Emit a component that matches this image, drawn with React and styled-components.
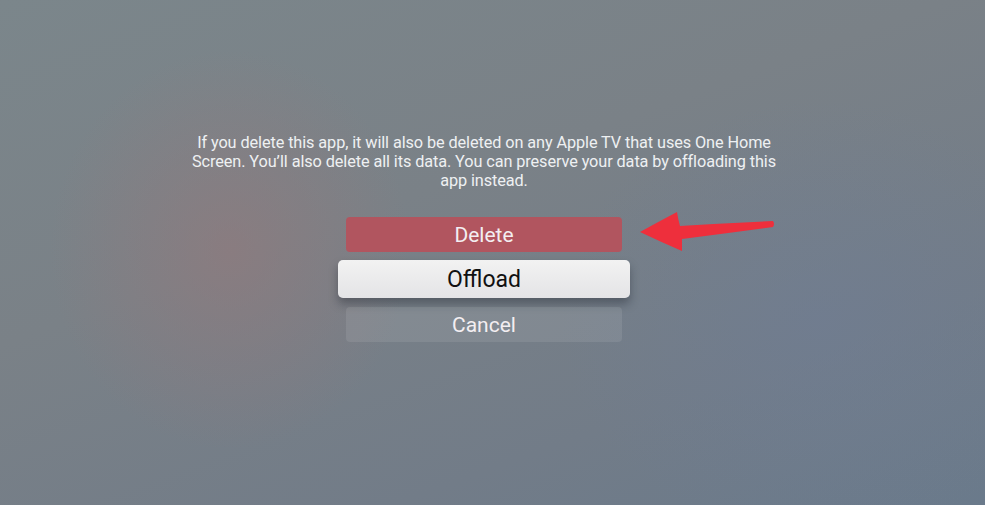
import React from "react";
import styled, { createGlobalStyle } from "styled-components";

const Global = createGlobalStyle`
  html, body { margin: 0; padding: 0; }
  body { font-family: Roboto, "Liberation Sans", Arial, sans-serif; }
`;

const Screen = styled.div`
  width: 985px;
  height: 505px;
  overflow: hidden;
  box-sizing: border-box;
  padding: 133px 17px 0 0;
  display: flex;
  flex-direction: column;
  align-items: center;
  background:
    radial-gradient(ellipse 180px 200px at 230px 250px, rgba(150, 120, 122, 0.55), rgba(150, 120, 122, 0) 100%),
    radial-gradient(ellipse 260px 220px at 820px 320px, rgba(110, 125, 150, 0.5), rgba(110, 125, 150, 0) 100%),
    linear-gradient(160deg, #7b868b 0%, #7a8187 40%, #727c88 75%, #6a7a8b 100%);
`;

const Message = styled.p`
  margin: 0;
  width: 600px;
  text-align: center;
  color: #eef0f2;
  font-size: 16.3px;
  line-height: 19px;
  letter-spacing: -0.1px;
`;

const ButtonStack = styled.div`
  margin-top: 27px;
  display: flex;
  flex-direction: column;
  align-items: center;
`;

const ButtonSlot = styled.div`
  position: relative;
  margin-top: ${(p) => p.$gap || 0}px;
`;

const Button = styled.div`
  box-sizing: border-box;
  display: flex;
  align-items: center;
  justify-content: center;
  width: ${(p) => (p.$focused ? 292 : 276)}px;
  height: ${(p) => (p.$focused ? 38 : 35)}px;
  border-radius: ${(p) => (p.$focused ? 5 : 4)}px;
  font-size: ${(p) => (p.$focused ? 23 : 21)}px;
  color: ${(p) => (p.$focused ? "#111" : "#f3eef1")};
  background: ${(p) =>
    p.$variant === "destructive"
      ? "#b1555f"
      : p.$focused
      ? "linear-gradient(#f2f2f2, #e4e4e6)"
      : "rgba(255,255,255,0.09)"};
  box-shadow: ${(p) =>
    p.$focused ? "0 6px 10px rgba(20, 25, 35, 0.35)" : "none"};
`;

const Arrow = styled.svg`
  position: absolute;
  left: 100%;
  top: -6px;
  margin-left: 12px;
  overflow: visible;
`;

export default function App() {
  return (
    <>
      <Global />
      <Screen>
        <Message>
          If you delete this app, it will also be deleted on any Apple TV that uses One Home
          Screen. You’ll also delete all its data. You can preserve your data by offloading this
          app instead.
        </Message>
        <ButtonStack>
          <ButtonSlot>
            <Button $variant="destructive">Delete</Button>
            <Arrow width="142" height="42" viewBox="0 0 142 42">
              <path
                d="M6 21 Q 24 11, 43 1 Q 44 8, 46 15 Q 92 12, 139 10 Q 141 13, 139 16 Q 94 22, 48 28 Q 48 34, 48 40 Q 27 31, 6 21 Z"
                fill="#ee2f3c"
              />
            </Arrow>
          </ButtonSlot>
          <ButtonSlot $gap={8}>
            <Button $focused>Offload</Button>
          </ButtonSlot>
          <ButtonSlot $gap={9}>
            <Button>Cancel</Button>
          </ButtonSlot>
        </ButtonStack>
      </Screen>
    </>
  );
}
